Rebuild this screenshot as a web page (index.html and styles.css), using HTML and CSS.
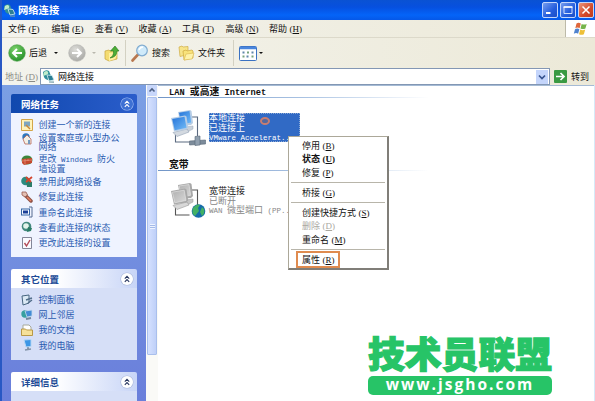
FILE: index.html
```html
<!DOCTYPE html>
<html>
<head>
<meta charset="utf-8">
<title>网络连接</title>
<link rel="stylesheet" href="styles.css">
</head>
<body>
<svg class="defs" width="0" height="0">
  <defs>
    <linearGradient id="scr" x1="0" y1="0" x2="1" y2="1"><stop offset="0" stop-color="#2473d8"/><stop offset="1" stop-color="#74bdf8"/></linearGradient>
    <linearGradient id="gscr" x1="0" y1="0" x2="1" y2="1"><stop offset="0" stop-color="#b0b0b0"/><stop offset="1" stop-color="#d8d8d8"/></linearGradient>
    <radialGradient id="green" cx=".4" cy=".3" r=".8"><stop offset="0" stop-color="#7ed36c"/><stop offset="1" stop-color="#1c8a22"/></radialGradient>
    <radialGradient id="grey" cx=".4" cy=".3" r=".8"><stop offset="0" stop-color="#dcdcd8"/><stop offset="1" stop-color="#a5a5a2"/></radialGradient>
    <symbol id="net" viewBox="0 0 13 13"><path d="M1 2q3-3 6-1l2 5-3 4q-5-1-5-8z" fill="#2f8f9a"/><path d="M2 2q3-2 4 0t-2 3-3 1z" fill="#bfeccb"/><path d="M5 5l5 .5 2 4.500-5 1z" fill="#2c7f95" stroke="#d4edf1" stroke-width=".8"/><path d="M7 12l5 .2" stroke="#6f98a3" stroke-width="1.200"/></symbol>
    <symbol id="pcs" viewBox="0 0 38 38">
      <path d="M20 7h6.500v19M4.500 24v8h14" fill="none" stroke="#5b6a80" stroke-width="1.100"/>
      <path d="M14 17l8-1v3l-6 3z" fill="#c9d1da" stroke="#9ba9ba" stroke-width=".5"/>
      <path d="M7 2l12-2 1.500 1 1.500 12-2 2-10 1z" fill="#b6cde6"/><path d="M8 2.800l10.500-1.700 1.700 11.500-10 2z" fill="url(#scr)"/>
      <path d="M2 22.500l14-3.500 2 3-12 4.500z" fill="#d3d9e0" stroke="#94a3b5" stroke-width=".6"/>
      <path d="M0 8l14-2.500 1.500 1 1.700 11-2 2L3 21.500z" fill="#b6cde6"/><path d="M1.200 9l12.300-2.200 2 11-11.800 2.500z" fill="url(#scr)"/>
    </symbol>
    <symbol id="gpcs" viewBox="0 0 38 38">
      <path d="M20 7h6.500v19M4.500 24v8h14" fill="none" stroke="#555" stroke-width="1.100"/>
      <path d="M14 17l8-1v3l-6 3z" fill="#c6c6c6" stroke="#999" stroke-width=".5"/>
      <path d="M7 2l12-2 1.500 1 1.500 12-2 2-10 1z" fill="#a8a8a8"/><path d="M8.200 3l9.800-1.500 1.700 10.800-9.500 1.700z" fill="url(#gscr)" stroke="#e8e8e8" stroke-width=".6"/>
      <path d="M2 22.500l14-3.500 2 3-12 4.500z" fill="#d8d8d8" stroke="#999" stroke-width=".6"/>
      <path d="M0 8l14-2.500 1.500 1 1.700 11-2 2L3 21.500z" fill="#a8a8a8"/><path d="M1.400 9.200l11.800-2 1.800 10.300-11.200 2.300z" fill="url(#gscr)" stroke="#e8e8e8" stroke-width=".6"/>
    </symbol>
    <symbol id="chev" viewBox="0 0 12 12"><path d="M3.800 5.600L6 3.400l2.200 2.200M3.800 8.800L6 6.600l2.200 2.200" fill="none" stroke="currentColor" stroke-width="1.100"/></symbol>
  </defs>
</svg>
<div class="window">
  <header class="title">
    <svg class="title-icon" width="13" height="13"><use href="#net"/></svg>
    <span class="title-text">网络连接</span>
    <div class="caption">
      <i class="cap"><svg width="14" height="14"><path d="M3 10h4.500" stroke="#fff" stroke-width="2"/></svg></i>
      <i class="cap"><svg width="14" height="14"><path d="M3 4h8v6.500h-8z" fill="none" stroke="#cfe0ff" stroke-width="1"/><path d="M2.500 4h9" stroke="#fff" stroke-width="1.500"/></svg></i>
      <i class="cap close"><svg width="14" height="14"><path d="M3.500 3.500l7 7m0-7l-7 7" stroke="#fff" stroke-width="1.500"/></svg></i>
    </div>
  </header>
  <nav class="menubar">
    <span>文件<em>(<u>F</u>)</em></span><span>编辑<em>(<u>E</u>)</em></span><span>查看<em>(<u>V</u>)</em></span><span>收藏<em>(<u>A</u>)</em></span><span>工具<em>(<u>T</u>)</em></span><span>高级<em>(<u>N</u>)</em></span><span>帮助<em>(<u>H</u>)</em></span>
    <div class="flag"><svg width="16" height="14" viewBox="0 0 16 14"><path d="M3.500 1.500q2-1.500 4.300 0l-1.200 4.700q-2-1.200-4.300 0z" fill="#df673c"/><path d="M8.700 1.900q2.500 1.300 5 0l-1.300 4.500q-2.400 1.200-4.900 0z" fill="#76b44a"/><path d="M2 7.200q2.300-1.300 4.400 0l-1.300 4.500q-2-1.300-4.300 0z" fill="#5083ce"/><path d="M7.300 7.600q2.500 1.300 4.900 0l-1.300 4.600q-2.500 1.200-4.900 0z" fill="#eec038"/></svg></div>
  </nav>
  <div class="toolbar">
    <svg class="nav-btn" width="18" height="18" viewBox="0 0 18 18"><circle cx="9" cy="9" r="8.300" fill="url(#green)" stroke="#4e9d48" stroke-width=".6"/><path d="M14 9H5m4-4L5 9l4 4" fill="none" stroke="#fff" stroke-width="2"/></svg>
    <span class="back">后退</span><i class="tri"></i>
    <svg class="fwd" width="18" height="18" viewBox="0 0 18 18"><circle cx="9" cy="9" r="8.300" fill="url(#grey)" stroke="#b4b4b0" stroke-width=".6"/><path d="M4 9h9M9 5l4 4-4 4" fill="none" stroke="#fff" stroke-width="2"/></svg>
    <i class="tri pale"></i>
    <svg class="up" width="16" height="17" viewBox="0 0 16 17"><path d="M1 6l4-1 1 1 7-1v9l-8 2-4-2z" fill="#f4dc72" stroke="#c6a33b" stroke-width=".7"/><path d="M5 8l9-1-3 7-6 2z" fill="#fff0a0"/><path d="M6 13q4-2 3.500-7H6.500l4.500-5 4 5h-2q0 6-7 7z" fill="#4cad36" stroke="#27761e" stroke-width=".6"/></svg>
    <i class="bar"></i>
    <svg class="search" width="18" height="18" viewBox="0 0 18 18"><path d="M1.500 16.500l5.500-6" stroke="#b87850" stroke-width="2.600" stroke-linecap="round"/><circle cx="11" cy="6.500" r="5.300" fill="#cfeafa" stroke="#7fabd0" stroke-width="1.200"/><path d="M8 6q1-3 4-3" fill="none" stroke="#fff" stroke-width="1.300"/></svg>
    <span class="search-text">搜索</span>
    <svg class="folders" width="17" height="16" viewBox="0 0 17 16"><path d="M1 2l3-1 1 1 5-.5v8l-8 2z" fill="#f7e489" stroke="#cfac45" stroke-width=".7"/><path d="M5 6l3-1 1 1 5-1 1 1v7l-9 2z" fill="#f9e37a" stroke="#cda83f" stroke-width=".7"/><path d="M6 15l2-6 8-1-2 6z" fill="#fff2a8" stroke="#d8b54f" stroke-width=".6"/></svg>
    <span class="folder-text">文件夹</span>
    <i class="bar second"></i>
    <svg class="views" width="18" height="15" viewBox="0 0 18 15"><rect x=".5" y=".5" width="17" height="14" rx="1" fill="#fff" stroke="#3b72c2"/><path d="M1 2h16" stroke="#4a86dd" stroke-width="2.500"/><path d="M3.500 6.500h2m7 0h2m-7 4h2" stroke="#6187aa" stroke-width="2"/><path d="M8 6.500h2m-6.500 4h2m7 0h2" stroke="#78a37c" stroke-width="2"/></svg><i class="tri"></i>
  </div>
  <div class="address">
    <span class="addr-label">地址<em>(<u>D</u>)</em></span>
    <div class="field"><svg width="13" height="13"><use href="#net"/></svg><span>网络连接</span><i class="drop"><svg width="12" height="14"><path d="M3 5.500l3 3 3-3" fill="none" stroke="#35538f" stroke-width="1.700"/></svg></i></div>
    <svg class="go" width="13" height="13"><rect width="13" height="13" rx="1" fill="#3a9a42"/><path d="M2 6.500h8M6.500 3l3.500 3.500L6.500 10" fill="none" stroke="#fff" stroke-width="1.700"/></svg>
    <span>转到</span>
  </div>
  <div class="content">
    <aside class="side">
      <section class="panel primary">
        <h2>网络任务<i class="fold"><svg width="12" height="12"><use href="#chev"/></svg></i></h2>
        <ul class="tasks">
          <li><svg viewBox="0 0 12 12"><path d="M.5.500h11v11H.5z" fill="#fff3b9" stroke="#d3a649"/><path d="M3 2.500h6v5H3z" fill="#7ea7c0"/><path d="M5 6l4 4" stroke="#c88838" stroke-width="1.500"/></svg><span>创建一个新的连接</span></li>
          <li class="two"><svg viewBox="0 0 12 12"><circle cx="5" cy="4" r="3.700" fill="#2f78bd"/><path d="M2 6l4-4 4 4v5H4z" fill="#f2f0e6" stroke="#b76755" stroke-width=".8"/><path d="M7 7h2v4H7z" fill="#7298bd"/></svg><span>设置家庭或小型办公<br>网络</span></li>
          <li class="two"><svg viewBox="0 0 12 12"><ellipse cx="6" cy="6" rx="5.500" ry="4.500" fill="#3a863c"/><path d="M1 5l10-1v5l-8 2-2-2z" fill="#c5492e"/><path d="M1 7l10-1M4 5v5m3-5v2" stroke="#eeb19b" stroke-width=".5"/></svg><span>更改<b> Windows </b>防火<br>墙设置</span></li>
          <li><svg viewBox="0 0 12 12"><circle cx="4.500" cy="5" r="4.300" fill="#2c8b80"/><path d="M5 5l6 1v5H6z" fill="#2d7d6a"/><path d="M5 1l5 5m1-5L5 6" stroke="#d4452d" stroke-width="1.800"/></svg><span>禁用此网络设备</span></li>
          <li><svg viewBox="0 0 12 12"><path d="M4 4l6 6" stroke="#8e5146" stroke-width="3.500" stroke-linecap="round"/><path d="M1 1l4 0 1.500 3L4 6 1 4z" fill="#e4c0b4" stroke="#985c50" stroke-width=".8"/><path d="M6 6l4 4" stroke="#e68162" stroke-width="1.500"/></svg><span>修复此连接</span></li>
          <li><svg viewBox="0 0 12 12"><rect x=".5" y="3" width="8" height="6" fill="#f6faff" stroke="#3565a6"/><path d="M2 4.500h5v3H2z" fill="#1a3e98"/><path d="M8 1h3v10H8" stroke="#556a91" fill="none"/></svg><span>重命名此连接</span></li>
          <li><svg viewBox="0 0 12 12"><circle cx="5.500" cy="5.500" r="4.800" fill="#43897e"/><circle cx="5" cy="5" r="2.800" fill="#e2f3ea"/><path d="M7 6l4 1-1 3-4 1z" fill="#287c65"/></svg><span>查看此连接的状态</span></li>
          <li><svg viewBox="0 0 12 12"><path d="M1.500.500h9v11h-9z" fill="#fafaff" stroke="#838699"/><path d="M3.500 6l2 3L9 3" fill="none" stroke="#b24a58" stroke-width="1.400"/></svg><span>更改此连接的设置</span></li>
        </ul>
      </section>
      <section class="panel">
        <h2>其它位置<i class="fold"><svg width="12" height="12"><use href="#chev"/></svg></i></h2>
        <ul class="places">
          <li><svg viewBox="0 0 12 12"><path d="M1 2l7-1v8l-6 2z" fill="#dceaf5" stroke="#476580"/><path d="M5 6l6-2M7 9l4-3" stroke="#526e8a" stroke-width="1.500"/></svg><span>控制面板</span></li>
          <li><svg viewBox="0 0 12 12"><circle cx="4" cy="5" r="3.700" fill="#36a0a0"/><path d="M4 2l7-1v6l-5 1z" fill="#438cd5" stroke="#c7dbef" stroke-width=".8"/><path d="M5 10l5-1" stroke="#71879d" stroke-width="2"/></svg><span>网上邻居</span></li>
          <li><svg viewBox="0 0 12 12"><path d="M2 1h6l2 2v6H2z" fill="#fff" stroke="#a7a99b"/><path d="M.5 5h4l1 1h6v5.500H.5z" fill="#f6e199" stroke="#b99947"/></svg><span>我的文档</span></li>
          <li><svg viewBox="0 0 12 12"><path d="M3 1l7-.5v7L5 8z" fill="#3b96e6" stroke="#b6d7f4"/><path d="M7 8v2M4 11l6-1" stroke="#8193a8" stroke-width="1.500"/></svg><span>我的电脑</span></li>
        </ul>
      </section>
      <section class="panel details"><h2>详细信息<i class="fold"><svg width="12" height="12"><use href="#chev"/></svg></i></h2><div class="detail-body"></div></section>
    </aside>
    <div class="scroll"><i class="arrow"><svg width="10" height="10"><path d="M2.500 6.500L5 4l2.500 2.500" fill="none" stroke="#4d6185" stroke-width="1.600"/></svg></i><i class="thumb"><i class="grip"></i></i></div>
    <main class="view">
      <h3><b>LAN </b>或高速<b> Internet</b></h3>
      <div class="conn">
        <div class="pic"><svg width="38" height="38"><use href="#pcs"/><path d="M18.500 31l16-1v4l-16 1z" fill="#7d8c9b" stroke="#566575" stroke-width=".6"/><path d="M24 26.500l5-.5v9l-5 .5z" fill="#91a0af" stroke="#566575" stroke-width=".6"/></svg></div>
        <div class="label selected"><p>本地连接</p><p>已连接上</p><p><b>VMware Accelerat...</b></p><i class="ring"></i></div>
      </div>
      <h3 class="broad">宽带</h3>
      <div class="conn off">
        <div class="pic"><svg width="38" height="38"><use href="#gpcs"/><circle cx="27.500" cy="28" r="6.800" fill="#156ba9"/><path d="M22 25q4-5 7-3l-2 3 1 3-4 5q-4-3-2-8zm9-1q5 4 0 9l-2-4z" fill="#42b164"/></svg></div>
        <div class="label"><p class="name">宽带连接</p><p>已断开</p><p><b>WAN </b>微型端口<b> (PP...</b></p></div>
      </div>
    </main>
  </div>
  <div class="popup">
    <div>停用<em>(<u>B</u>)</em></div>
    <div class="strong">状态<em>(<u>U</u>)</em></div>
    <div>修复<em>(<u>P</u>)</em></div>
    <hr>
    <div>桥接<em>(<u>G</u>)</em></div>
    <hr>
    <div>创建快捷方式<em>(<u>S</u>)</em></div>
    <div class="disabled">删除<em>(<u>D</u>)</em></div>
    <div>重命名<em>(<u>M</u>)</em></div>
    <hr>
    <div class="marked">属性<em>(<u>R</u>)</em></div>
  </div>
  <div class="brand"><div class="brand-name">技术员联盟</div><div class="brand-url">www.jsgho.com</div></div>
</div>
</body>
</html>
```

FILE: styles.css
```css
* { box-sizing: border-box; }
body { margin: 0; width: 595px; height: 401px; overflow: hidden; background: #fff; font: 9px/10px "Noto Sans CJK SC", sans-serif; color: #111; }
b { font: 7.5px/8px "Liberation Mono", monospace; white-space: pre; }
em { font: 9px/9px "Liberation Serif", serif; margin-left: 2.5px; }
u { text-decoration-thickness: .6px; text-underline-offset: 1px; }
i { font-style: normal; display: block; }
svg { display: block; flex: none; }
h2, h3, p, ul { margin: 0; padding: 0; }
.defs { position: absolute; }
.window { position: relative; width: 595px; height: 401px; border-left: 2px solid #2858c4; overflow: hidden; display: flex; flex-direction: column; }
.title { height: 20px; flex: none; display: flex; align-items: center; padding-right: 1px; background: linear-gradient(#0a52d3, #0650df 35%, #0464f8 75%, #0558e8); }
.title-icon { margin-left: 1px; }
.title-text { margin-left: 2px; color: #fff; font-size: 10.3px; font-weight: 700; line-height: 14px; }
.caption { margin-left: auto; display: flex; gap: 2px; }
.cap { width: 16px; height: 16px; border: 1px solid #c3d6fb; border-radius: 2px; background: linear-gradient(135deg, #779dee, #245ddd 60%, #1d4fc4); }
.close { background: linear-gradient(135deg, #e9957c, #d4492a 60%, #b93c20); }
.menubar { height: 18px; flex: none; display: flex; align-items: center; padding-left: 6px; background: linear-gradient(90deg, #f3f3ed, #ece9d8); border-bottom: 1px solid #dcd9ca; }
.menubar span { width: 43.5px; white-space: nowrap; }
.flag { width: 30px; height: 17px; margin-left: auto; display: flex; align-items: center; padding-left: 7px; background: #fff; border-left: 1px solid #bdbaa9; }
.toolbar { height: 30px; flex: none; display: flex; align-items: center; padding: 0 0 0 6px; background: linear-gradient(90deg, #f4f4ee, #ece9d8); }
.back { margin-left: 3px; width: 19px; }
.tri { width: 0; height: 0; margin-left: 6px; border: 2px solid transparent; border-top: 2.5px solid #111; border-bottom: 0; }
.pale { border-top-color: #b9b8ae; }
.fwd { margin-left: 10px; }
.up { margin-left: 8px; }
.bar { width: 1px; height: 26px; margin-left: 5px; background: #d3d1c2; }
.search { margin-left: 5px; }
.search-text { margin-left: 3px; width: 18px; }
.folders { margin-left: 8px; }
.folder-text { margin-left: 3px; width: 27px; }
.second { margin-left: 8px; }
.views { margin-left: 5px; }
.views + .tri { margin-left: 2px; }
.address { height: 17px; flex: none; display: flex; align-items: center; background: linear-gradient(90deg, #f3f3ed, #ece9d8); }
.addr-label { color: #8b8b86; width: 38px; padding-left: 3px; white-space: nowrap; }
.field { width: 510px; height: 17px; display: flex; align-items: center; gap: 3px; padding: 0 1px; background: #fff; border: 1px solid #8397b4; }
.drop { width: 12px; height: 14px; margin-left: auto; background: #c4d5fb; }
.go { margin: 0 4px 0 4px; }
.content { flex: 1; min-height: 0; display: flex; border-right: 1px solid #d6eaf8; }
.side { width: 144px; padding: 9px 9px 0; background: linear-gradient(#7b9fe4, #6a7fdb); overflow: hidden; }
.panel { margin-bottom: 12px; color: #2a5bb0; }
h2 { display: flex; align-items: center; height: 19px; padding: 0 4px 0 10px; font-size: 9.5px; line-height: 12px; color: #204a96; background: linear-gradient(90deg, #fff 35%, #c8d5f7); border-radius: 2px 2px 0 0; }
.primary h2 { color: #fff; background: linear-gradient(90deg, #1048ae, #2a5dcb); }
.fold { width: 12px; height: 12px; margin-left: auto; border-radius: 50%; background: #fff; color: #26355f; box-shadow: 0 0 0 .6px #aebbdc; }
.primary .fold { background: #3d70d3; color: #fff; box-shadow: 0 0 0 .6px #9fbcf5; }
ul { list-style: none; background: #d6dff7; }
li { display: flex; height: 15.2px; align-items: center; gap: 5.5px; padding-left: 10px; line-height: 9.2px; white-space: nowrap; }
li svg { width: 12px; height: 12px; }
.tasks { height: 144px; padding-top: 4px; background: #eff3ff; }
.two { height: 21px; align-items: flex-start; padding-top: 1px; }
.places { height: 72px; padding-top: 4px; }
.details { margin: 0; }
.detail-body { height: 20px; background: #d6dff7; }
.scroll { width: 12px; padding-left: 1px; background: #fafaf7; }
.arrow { width: 10px; height: 11px; margin-bottom: 1px; background: #c8d7fb; border-radius: 1px; }
.thumb { width: 10px; height: 258px; background: linear-gradient(90deg, #d5e1ff, #bfd0f8); border: .5px solid #a9bfec; border-radius: 1px; display: flex; align-items: center; justify-content: center; }
.grip { width: 5px; height: 5px; background: repeating-linear-gradient(#edf3ff 0 1px, #a4bae8 1px 2px); }
.view { flex: 1; border-top: 1px solid #a5bbd5; background: #fff; }
h3 { height: 12px; padding-left: 11px; font-size: 9.8px; line-height: 11px; border-bottom: 1px solid; border-image: linear-gradient(90deg, #7195c7, #aac3e3 55%, #fff) 1; width: 270px; }
h3 b { font-weight: 700; font-size: 8.7px; }
.conn { display: flex; height: 61px; padding: 12px 0 0 13px; }
.pic { width: 38px; }
.label { position: relative; width: 91px; height: 29px; line-height: 9.7px; color: #888; white-space: nowrap; }
.label p { height: 9.7px; }
.selected { margin-top: 3px; color: #fff; background: #316ac5; outline: 1px dotted #8ca9d3; outline-offset: -1px; }
.ring { position: absolute; left: 51px; top: 4px; width: 10px; height: 8px; border: 2px solid #c97d70; border-radius: 50%; background: #54699f; }
.off .label { margin-top: 3px; }
.name { color: #111; }
.popup { position: absolute; left: 286px; top: 136px; width: 101px; height: 134px; padding: 1.5px 2px; background: #fff; border: 1px solid #aca899; border-right: 2px solid #807e78; border-bottom: 2px solid #807e78; }
.popup div { height: 13.5px; line-height: 13.5px; padding-left: 11px; white-space: nowrap; }
.popup hr { height: 1px; margin: 2.8px 0; border: 0; background: #b8b5aa; }
.popup .strong, .strong em { font-weight: 700; }
.popup .disabled { color: #aaa89f; }
.popup .marked { width: 44px; height: 17px; margin: -2px 0 0 5px; padding-left: 4px; border: 2px solid #df8b4f; }
.brand { position: absolute; left: 366px; top: 332px; width: 186px; color: #27c467; }
.brand-name { height: 44px; font-size: 36.8px; line-height: 40px; font-weight: 900; white-space: nowrap; -webkit-text-stroke: 1.2px #27c467; }
.brand-url { height: 19px; width: 184px; border-radius: 5px; background: #27c467; color: #fff; font: 700 15.5px/16px "Open Sans", sans-serif; letter-spacing: 2px; text-align: center; }
```
